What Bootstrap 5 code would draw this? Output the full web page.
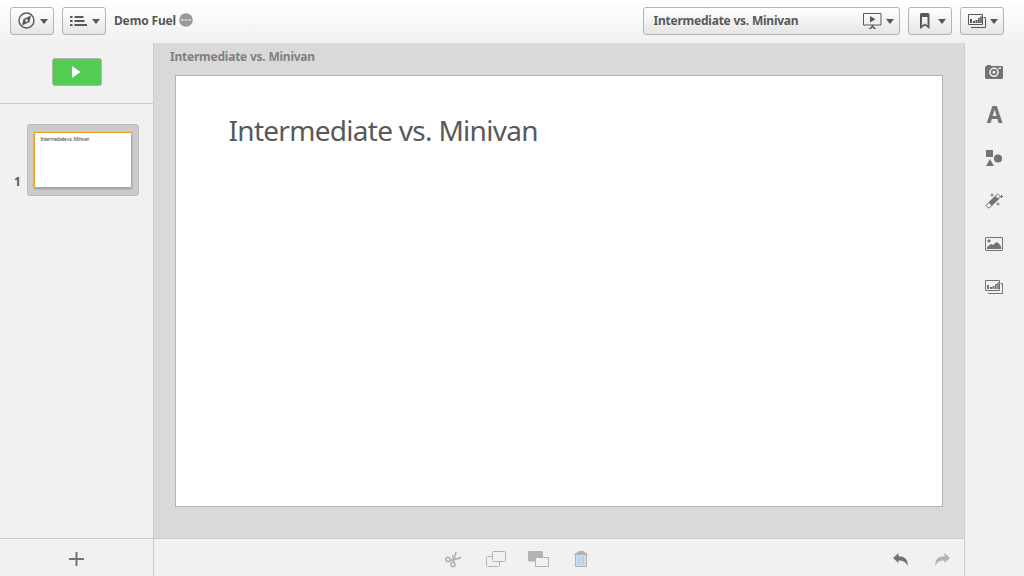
<!DOCTYPE html>
<html lang="en">
<head>
<meta charset="utf-8">
<meta name="viewport" content="width=device-width, initial-scale=1">
<title>Intermediate vs. Minivan</title>
<link href="https://cdn.jsdelivr.net/npm/bootstrap@5.3.0/dist/css/bootstrap.min.css" rel="stylesheet">
<style>
body{font-family:"Noto Sans",sans-serif;font-size:12px;line-height:16px;color:#595959;background:#f1f1f1}
svg{display:block;flex:none}
.topbar{height:43px;padding:0 20px 0 10px;background:linear-gradient(#fff,#f1f1f1)}
.tool{height:28px;width:44px;margin-top:-1px;padding:0;border:1px solid #b3b3b3;border-radius:3px;background:linear-gradient(#fff,#e5e5e5);color:#595959;font-size:12px;line-height:16px}
.tool.wide{width:257px;padding-left:9.500px}
.caret{width:8px;height:5px;fill:currentColor}
.label-bold{font-weight:700;white-space:nowrap;letter-spacing:-.23px}
.side{width:154px;border-right:1px solid #ccc}
.play-area{height:61px;border-bottom:1px solid #ccc}
.play{width:50px;height:28px;padding:0;border:1px solid #b3b3b3;border-radius:3px;background:#52cc52}
.thumb{width:112px;height:72px;background:#cbcbcb;border:1px solid #bfbfbf;border-radius:3px;padding:7px 6px}
.mini{width:98px;height:56px;background:#fff;border:1px solid #f39c1a;border-radius:1px;box-shadow:0 1px 2px #999}
.mini div{font-size:4.8px;line-height:6px;padding:3px 0 0 5.500px;color:#404040;white-space:nowrap;letter-spacing:-.3px}
.foot{height:38px;border-top:1px solid #ccc;background:#f1f1f1}
.stage{background:#d9d9d9}
.slide{width:768px;height:432px;margin-left:21px;background:#fff;border:1px solid #b3b3b3}
.slide h1{margin:35px 0 0 52.500px;font-size:28px;line-height:38px;font-weight:400;color:#595959;white-space:nowrap;letter-spacing:-.71px}
.rail{width:60px;border-left:1px solid #ccc;color:#737373;padding:7px 1px 0 0}
.rail>div{height:43px}
.letter{font-size:22.500px;line-height:22px;font-weight:700}
.letter span{margin:0 0 0 1px}
</style>
</head>
<body class="vh-100 overflow-hidden d-flex flex-column">
<svg width="0" height="0" class="position-absolute"><defs>
<g id="charts"><path d="M.5.5h14v10H.5z" fill="none" stroke="currentColor"/><path d="M3 13.500h14.500v-10h-2" fill="none" stroke="currentColor"/><path d="M2 5h2v4H2zM5 7h2v2H5zM7.500 6h2v3h-2zM10 4h1.700v5H10zM12.200 2.500h1.600V9h-1.600z" fill="currentColor"/></g>
<path id="down" d="M0 0h8L4 5z"/>
</defs></svg>

<header class="topbar d-flex align-items-center">
  <button class="tool btn d-flex align-items-center">
    <svg width="18" height="18" style="margin-left:7px"><circle cx="8.500" cy="8.500" r="7.500" fill="none" stroke="currentColor" stroke-width="1.400"/><path d="M13 3.500 11.500 10 4 13.500 5.500 7zM8.500 6.900a1.300 1.600 0 1 0 .1 0z" fill="currentColor" fill-rule="evenodd"/></svg>
    <svg class="caret" style="margin-left:4px"><use href="#down"/></svg>
  </button>
  <button class="tool btn d-flex align-items-center ms-2">
    <svg width="18" height="12" style="margin-left:7px" fill="currentColor"><path d="M0 1h2.500v2H0zM0 5h2.500v2H0zM0 9h2.500v2H0zM4.500 1h9v2h-9zM4.500 5h10v2h-10zM4.500 9H17v2H4.500z"/></svg>
    <svg class="caret" style="margin-left:4px"><use href="#down"/></svg>
  </button>
  <span class="label-bold ms-2" style="margin-top:-1px;letter-spacing:-.16px">Demo Fuel</span>
  <svg width="14" height="14" style="margin:-4px 0 0 3px"><circle cx="7" cy="7" r="6.800" fill="#999"/><path d="M2 7h2.700M5.700 7h2.700M9.400 7h2.700" stroke="#fff" stroke-width="1"/></svg>
  <button class="tool wide btn d-flex align-items-center ms-auto">
    <span class="label-bold">Intermediate vs. Minivan</span>
    <svg class="ms-auto" width="19" height="16"><path d="M.5.5h17.500v11.500H.5z" fill="none" stroke="currentColor"/><path d="M7 3v6.500l5.500-3.200zM8.500 12h2v1.500l3 2.500H11l-1.500-1.500L8 16H5.500l3-2.500z" fill="currentColor"/></svg>
    <svg class="caret" style="margin:0 5px 0 4px"><use href="#down"/></svg>
  </button>
  <button class="tool btn d-flex align-items-center ms-2">
    <svg width="10" height="16" style="margin-left:11px"><path d="M1 0h7l1.500 1v15L5 12.500 0 16V1zM2 4v8.500l3-2 2.500 2V4z" fill="currentColor" fill-rule="evenodd"/></svg>
    <svg class="caret" style="margin-left:8px"><use href="#down"/></svg>
  </button>
  <button class="tool btn d-flex align-items-center ms-2">
    <svg width="18" height="14" style="margin-left:7px"><use href="#charts"/></svg>
    <svg class="caret" style="margin-left:4px"><use href="#down"/></svg>
  </button>
</header>

<div class="d-flex flex-grow-1">
  <aside class="side d-flex flex-column">
    <div class="play-area d-flex justify-content-center pt-3"><button class="play btn d-flex align-items-center justify-content-center" style="margin-top:-1px"><svg width="11" height="12"><path d="M1 0v12l8.500-6z" fill="#fff"/></svg></button></div>
    <div class="d-flex align-items-end" style="padding:20px 0 0 14px">
      <span class="label-bold" style="width:13px;margin-bottom:6px">1</span>
      <div class="thumb"><div class="mini"><div>Intermediate vs. Minivan</div></div></div>
    </div>
    <div class="foot mt-auto d-flex align-items-center justify-content-center" style="padding-top:3px"><svg width="15" height="14"><path d="M0 7h15M7.500 0v14" stroke="#737373" stroke-width="2"/></svg></div>
  </aside>

  <main class="flex-grow-1 d-flex flex-column">
    <section class="stage flex-grow-1">
      <div class="label-bold" style="height:32px;padding:6px 0 0 16px;color:#808080">Intermediate vs. Minivan</div>
      <article class="slide"><h1>Intermediate vs. Minivan</h1></article>
    </section>
    <div class="foot d-flex align-items-center" style="color:#b3b3b3;padding:3px 14px 0 291px">
      <svg width="17" height="17" fill="none" stroke="currentColor" stroke-width="1.600"><circle cx="3" cy="8.500" r="2.100"/><circle cx="8" cy="13.500" r="2.100"/><path d="M5 9.500 16 6.500M8.300 11.500 11 1" /><path d="M5 9.800 9 8.500 15.500 7M8.500 11 7.500 4" stroke-width="1.300"/></svg>
      <svg width="21" height="17" style="margin-left:24px" fill="none" stroke="currentColor"><rect x=".5" y="5.500" width="13" height="10" rx="1"/><rect x="6.500" y=".5" width="13" height="10" rx="1" fill="#f1f1f1"/></svg>
      <svg width="21" height="17" style="margin-left:21px" stroke="currentColor"><rect x=".5" y=".5" width="14" height="9.500" rx=".5" fill="currentColor"/><rect x="7.500" y="6.500" width="13" height="9" fill="#f1f1f1"/></svg>
      <svg width="14" height="17" style="margin-left:25px"><path d="M2 4h10v11.500H2z" fill="#c6dff5"/><path d="M1.500 4v11.500h11V4" fill="none" stroke="#b3b3b3"/><path d="M4.500 5v9M7 5v9M9.500 5v9" stroke="#b3c5d5" stroke-width=".8"/><path d="M0 3 3 1.500 4.500 0h5L11 1.500 14 3 13 4H1z" fill="#b3b3b3"/></svg>
      <svg class="ms-auto" width="15" height="13" style="color:#737373"><path id="undo" d="M0 5 5.500 0v3.200C12 3 15.500 7 14.500 13 13 9 10 7.500 5.500 7.500V10z" fill="currentColor"/></svg>
      <svg width="15" height="13" style="margin-left:27px"><use href="#undo" transform="matrix(-1 0 0 1 15 0)"/></svg>
    </div>
  </main>

  <nav class="rail d-flex flex-column align-items-center">
    <div class="d-flex align-items-center"><svg width="18" height="14"><path d="M1 1h1V0h4v1h11l1 1v11l-1 1H1l-1-1V2zM13.500 2.500v1.500H16V2.500z" fill="currentColor" fill-rule="evenodd"/><circle cx="9" cy="7.300" r="4.800" fill="#f1f1f1"/><circle cx="9" cy="7.300" r="2.400" fill="none" stroke="currentColor" stroke-width="1.700"/></svg></div>
    <div class="d-flex align-items-center letter"><span>A</span></div>
    <div class="d-flex align-items-center"><svg width="18" height="17" fill="currentColor"><path d="M1 1h7v7H1zM5 10l4 7H1z"/><circle cx="13" cy="9.500" r="4.100"/></svg></div>
    <div class="d-flex align-items-center"><svg width="18" height="16"><path d="M.8 12.500 12.500 1l3 2.800L4 15.200z" fill="#f1f1f1" stroke="currentColor"/><path d="M3.500 9.800 10.500 3l3.500 3L7 12.800z" fill="currentColor"/><path d="M5.500 2h3M7 .5v3M11.500 11h3M13 9.500v3M15 3.500h3M16.500 2v3" stroke="currentColor"/></svg></div>
    <div class="d-flex align-items-center"><svg width="18" height="14"><rect x=".5" y=".5" width="17" height="13" rx=".5" fill="none" stroke="currentColor"/><circle cx="4" cy="3.800" r="1.600" fill="currentColor"/><path d="M2 12v-2l4-3 2 1 3.500-3L13 6l1 .5 2 3V12z" fill="currentColor"/></svg></div>
    <div class="d-flex align-items-center"><svg width="18" height="14"><use href="#charts"/></svg></div>
  </nav>
</div>
<script src="https://cdn.jsdelivr.net/npm/bootstrap@5.3.0/dist/js/bootstrap.bundle.min.js"></script>
</body>
</html>
